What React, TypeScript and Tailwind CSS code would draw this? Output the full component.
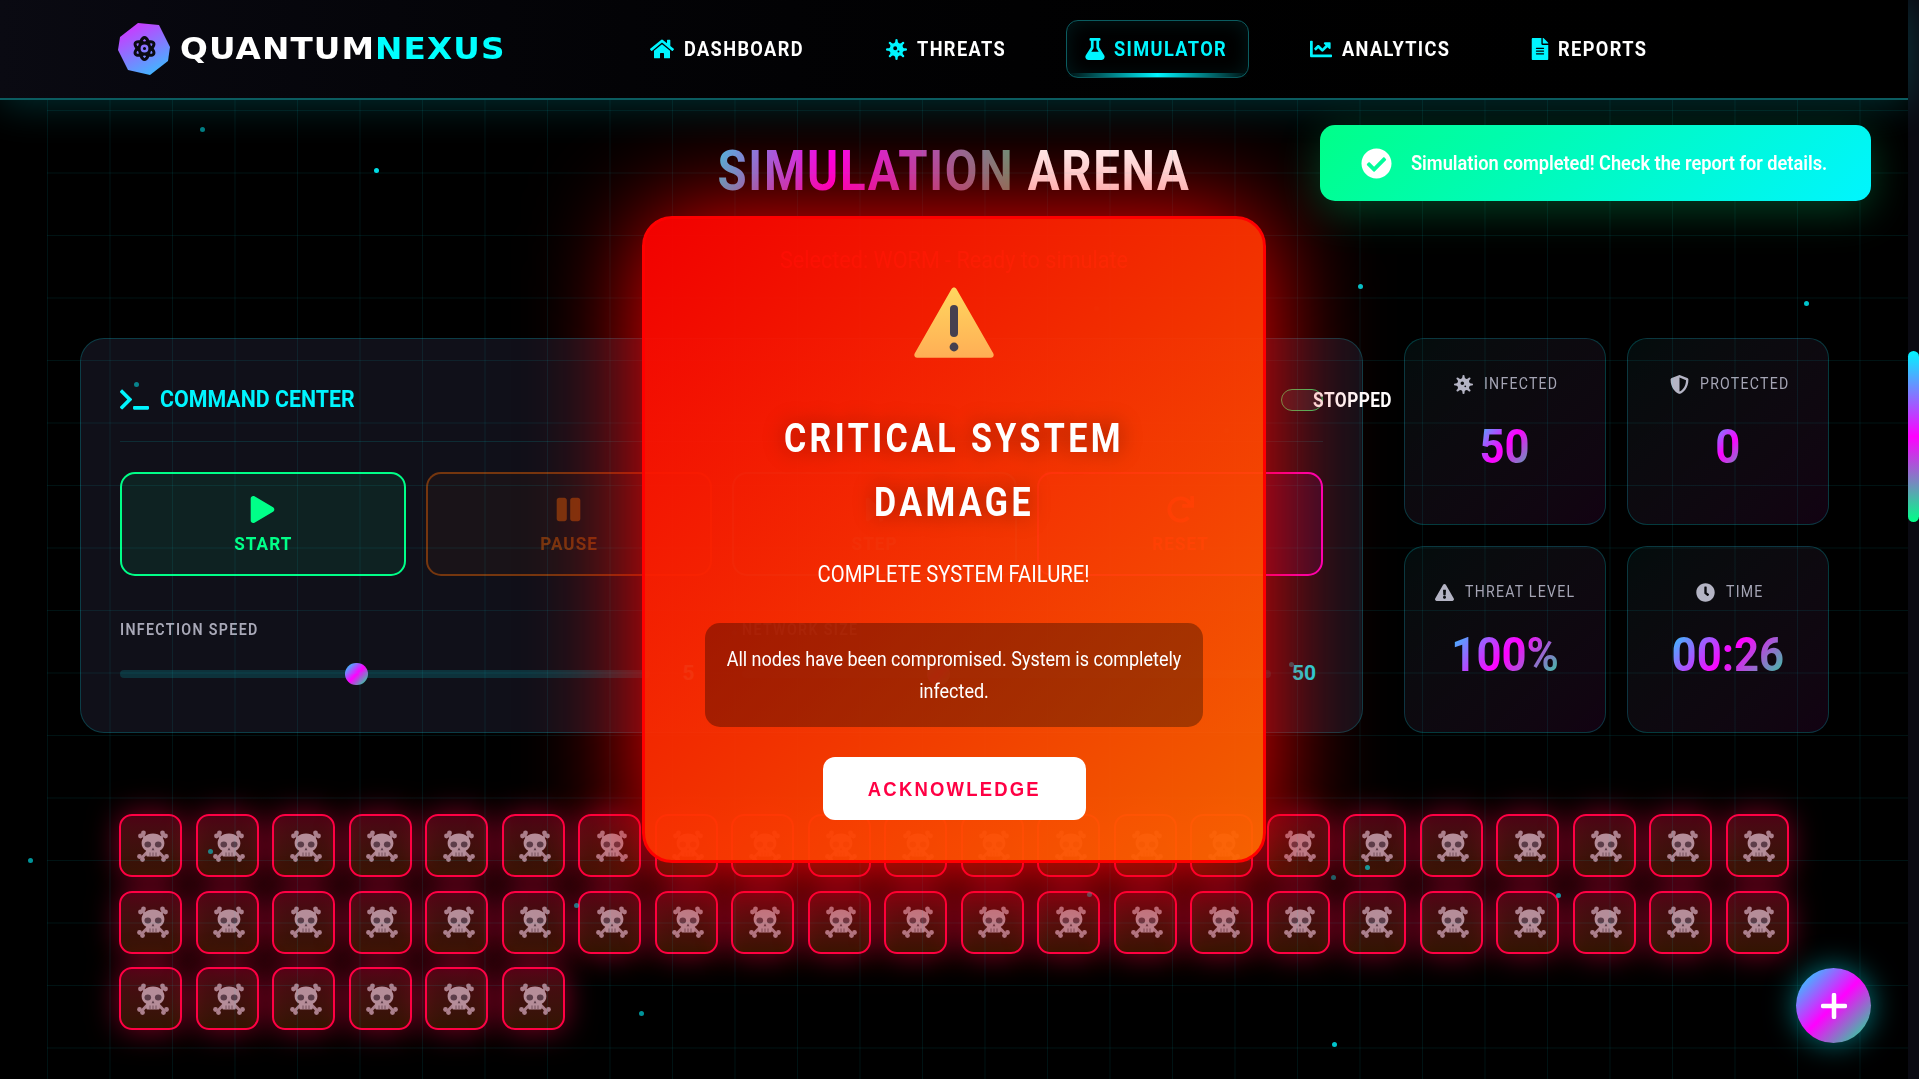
import React from "react";
import { FaAtom, FaHome, FaVirus, FaFlask, FaChartLine, FaFileAlt, FaShieldAlt, FaExclamationTriangle, FaClock, FaCheckCircle, FaPlay, FaPause, FaRedo, FaTerminal, FaStepForward } from "react-icons/fa";

const nav = [
  { label: "DASHBOARD", Icon: FaHome, active: false, item: "gap-[10px] px-[20px]", icon: "text-[24px]", w: "w-[120px]" },
  { label: "THREATS", Icon: FaVirus, active: false, item: "gap-[10px] px-[20px]", icon: "text-[21px]", w: "w-[88px]" },
  { label: "SIMULATOR", Icon: FaFlask, active: true, item: "gap-[8px] pl-[17px] pr-[23px]", icon: "text-[22px]", w: "w-[111px]" },
  { label: "ANALYTICS", Icon: FaChartLine, active: false, item: "gap-[10px] px-[20px]", icon: "text-[22px]", w: "w-[107px]" },
  { label: "REPORTS", Icon: FaFileAlt, active: false, item: "gap-[7px] pl-[18px] pr-[20px]", icon: "text-[22px]", w: "w-[88px]" },
];

const particles: [number, number, number][] = [
  [200, 127, 0.5], [374, 168, 0.9], [1358, 284, 0.8], [1804, 301, 0.8], [1094, 306, 0.1], [1224, 428, 0.1], [1289, 662, 0.4],
  [28, 858, 0.6], [208, 849, 0.5], [574, 903, 0.5], [639, 1011, 0.6], [1332, 1042, 0.8], [1365, 865, 0.6], [1331, 875, 0.4],
  [1556, 893, 0.6], [1087, 892, 0.4], [134, 382, 0.5], [732, 630, 0.15],
];

const nodes = Array.from({ length: 50 }, (_, i) => i);
const tri = "bg-[linear-gradient(135deg,#00f5ff,#ff00ff,#00ff88)]";

function Skull() {
  return (
    <svg viewBox="0 0 32 32" className="h-[32px] w-[32px] translate-x-[2px]">
      <g stroke="#ab7f8c" strokeWidth="3" strokeLinecap="round">
        <path d="M5 4.500L27 27.500M27 4.500L5 27.500" />
      </g>
      <g fill="#ab7f8c">
        <circle cx="3.500" cy="6" r="2.400" /><circle cx="6.500" cy="3" r="2.400" />
        <circle cx="28.500" cy="6" r="2.400" /><circle cx="25.500" cy="3" r="2.400" />
        <circle cx="2.500" cy="26.500" r="2.400" /><circle cx="5.500" cy="29.500" r="2.400" />
        <circle cx="29.500" cy="26.500" r="2.400" /><circle cx="26.500" cy="29.500" r="2.400" />
      </g>
      <path d="M16 3.500C9 3.500 4.600 8 4.600 13.300c0 3.500 1.900 6 4.600 7.400v4.300c0 1 .8 1.500 1.700 1.500h10.200c.9 0 1.700-.5 1.700-1.500v-4.300c2.700-1.400 4.600-3.900 4.600-7.400C27.400 8 23 3.500 16 3.500z" fill="#b58d99" />
      <ellipse cx="10.800" cy="14.500" rx="3.300" ry="3" fill="#5c3d49" />
      <ellipse cx="21.200" cy="14.500" rx="3.300" ry="3" fill="#5c3d49" />
      <path d="M16 17.600l1.400 2.600h-2.800z" fill="#5c3d49" />
      <path d="M13 22.500v3.800M16 22.500v3.800M19 22.500v3.800" stroke="#6d4a56" strokeWidth="0.9" />
    </svg>
  );
}

function Warning() {
  return (
    <svg viewBox="0 0 80 71" className="h-[71px] w-[80px]">
      <defs>
        <linearGradient id="warn" x1="0" y1="0" x2="0" y2="1">
          <stop offset="0" stopColor="#ffd75f" />
          <stop offset="1" stopColor="#ffae55" />
        </linearGradient>
      </defs>
      <path d="M37.400 2.200c1.200-2.400 4-2.400 5.200 0l36.600 64c1.200 2.200.2 4.600-2.400 4.600H3.200C.6 70.800-.4 68.400.8 66.200z" fill="url(#warn)" />
      <rect x="36" y="18" width="8" height="32" rx="4" fill="#45404f" />
      <circle cx="40" cy="60" r="4.400" fill="#45404f" />
    </svg>
  );
}

function Stat({ Icon, label, value, w }: { Icon: React.ComponentType<{ className?: string }>; label: string; value: string; w: string }) {
  return (
    <div className="flex h-[187px] flex-col items-center rounded-[20px] border border-[#00f5ff33] bg-gradient-to-br from-[#00f5ff0d] to-[#ff00ff12] pt-[30px]">
      <div className="flex h-[30px] items-center gap-[11px] text-[17px] tracking-[1.5px] text-[#a5a5b5]">
        <Icon className="text-[19px] text-[#b4b4c4]" />
        <span className={`whitespace-nowrap ${w}`}>
          <span className="inline-block origin-left scale-x-[0.83]">{label}</span>
        </span>
      </div>
      <div className={`mt-[18px] scale-x-[0.91] bg-clip-text px-[10px] text-[48px] font-bold leading-[60px] text-transparent ${tri}`}>
        {value}
      </div>
    </div>
  );
}

function Control({ Icon, label, cls }: { Icon: React.ComponentType<{ className?: string }>; label: string; cls: string }) {
  return (
    <div className={`flex h-[104px] flex-col items-center rounded-[15px] border-[2px] pt-[22px] ${cls}`}>
      <Icon className="text-[27px]" />
      <span className="mt-[9px] scale-x-[0.9] text-[19px] font-bold leading-[24px] tracking-[1.2px]">{label}</span>
    </div>
  );
}

function Slider({ label, value, pct }: { label: string; value: string; pct: string }) {
  return (
    <div>
      <div className="origin-left scale-x-[0.89] text-[16px] font-semibold leading-[20px] tracking-[1.5px] text-[#a9a9b8]">{label}</div>
      <div className="mt-[22px] flex h-[24px] items-center">
        <div className="relative h-[8px] flex-1 rounded-full bg-[#00f5ff26]">
          <div className={`absolute top-[-7px] h-[22px] w-[23px] rounded-full ${tri} ${pct}`} />
        </div>
        <div className="w-[52px] pr-[7px] text-right text-[21px] font-bold text-[#00f5ff]">{value}</div>
      </div>
    </div>
  );
}

export default function App() {
  return (
    <div className="relative flex h-screen w-screen overflow-hidden bg-black font-['Roboto',sans-serif] text-white">
      <div className="relative min-w-0 flex-1">
        <header className="relative z-10 flex h-[100px] items-center border-b-[2px] border-[#0b5c60] bg-gradient-to-r from-[#0a0a12] to-black pl-[118px] shadow-[0_4px_40px_#00f5ff33]">
          <div className="flex w-[386px] items-center gap-[10px]">
            <div className="relative h-[52px] w-[52px]">
              <svg viewBox="0 0 52 52" className="absolute inset-0 h-full w-full">
                <defs>
                  <linearGradient id="lg" x1="0.2" y1="0" x2="0.7" y2="1">
                    <stop offset="0" stopColor="#d431ff" />
                    <stop offset="1" stopColor="#3fb8ff" />
                  </linearGradient>
                </defs>
                <polygon points="20,0 41,2 52,24 50,38 32,52 10,47 0,27 2,14" fill="url(#lg)" />
              </svg>
              <FaAtom className="absolute left-[14px] top-[13px] text-[25px] text-[#0a0a12]" />
            </div>
            <div className="origin-left scale-x-[1.09] whitespace-nowrap font-['DejaVu_Sans',sans-serif] text-[30px] font-bold leading-none tracking-[1px]">
              QUANTUM<span className="text-[#00ffff]">NEXUS</span>
            </div>
          </div>
          <nav className="ml-[125px] flex gap-[40px]">
            {nav.map(({ label, Icon, active, item, icon, w }) => (
              <div key={label} className={`relative flex h-[58px] items-center rounded-[12px] text-[20px] font-bold tracking-[1.5px] ${item} ${active ? "border border-[#0b5c60] text-[#00f5ff] shadow-[inset_0_0_20px_#00f5ff1a]" : "border border-transparent"}`}>
                <Icon className={`text-[#00f5ff] ${icon}`} />
                <span className={`whitespace-nowrap ${w}`}>
                  <span className="inline-block origin-left scale-x-[0.91]">{label}</span>
                </span>
                {active && <div className="absolute bottom-0 left-0 right-0 h-[4px] rounded-full bg-gradient-to-r from-transparent via-[#00f5ff] to-transparent" />}
              </div>
            ))}
          </nav>
        </header>

        <main className="relative px-[80px]">
          <h1 className="scale-x-[0.845] pt-[37px] text-center text-[56px] font-bold leading-[68px] tracking-[2px]">
            <span className="bg-[linear-gradient(90deg,#3fc8f0_0%,#ff00ff_38%,#5fa080_100%)] bg-clip-text text-transparent">SIMULATION</span>{" "}
            <span>ARENA</span>
          </h1>
          <p className="mt-[41px] scale-x-[0.9] text-center text-[24px] leading-[28px] text-[#ff0040] opacity-80">Selected: WORM - Ready to simulate</p>

          <div className="mt-[64px] grid grid-cols-[1283px_425px] gap-x-[41px]">
            <section className="h-[395px] rounded-[24px] border border-[#00f5ff33] bg-[#14141fcc] px-[39px] pt-[36px]">
              <div className="flex h-[67px] items-start justify-between border-b border-[#00f5ff1f]">
                <div className="mt-[8px] flex items-center gap-[11px] text-[24px] font-bold leading-[32px] text-[#00f5ff]">
                  <FaTerminal className="text-[29px]" />
                  <span className="origin-left scale-x-[0.89]">COMMAND CENTER</span>
                </div>
                <div className="relative mt-[14px] h-[22px] w-[42px] rounded-full border border-[#2fdc70] bg-[#ffffff14]">
                  <span className="absolute left-[31px] top-[-2px] origin-left scale-x-[0.86] text-[20px] font-bold leading-[24px] tracking-[0.5px]">STOPPED</span>
                </div>
              </div>
              <div className="mt-[30px] grid grid-cols-4 gap-[20px]">
                <Control Icon={FaPlay} label="START" cls="border-[#00ff88] bg-[#00ff8814] text-[#00ff88]" />
                <Control Icon={FaPause} label="PAUSE" cls="border-[#ff6b0066] bg-[#ff6b000a] text-[#ff6b0066]" />
                <Control Icon={FaStepForward} label="STEP" cls="border-[#00f5ff66] text-[#00f5ff66]" />
                <Control Icon={FaRedo} label="RESET" cls="border-[#ff00cc] bg-[#ff00cc1a] text-[#ff0044]" />
              </div>
              <div className="mt-[44px] grid grid-cols-2 gap-[40px]">
                <Slider label="INFECTION SPEED" value="5" pct="left-[225px]" />
                <Slider label="NETWORK SIZE" value="50" pct="left-[185px]" />
              </div>
            </section>
            <aside className="grid h-[395px] grid-cols-[202px_202px] gap-[21px]">
              <Stat Icon={FaVirus} label="INFECTED" value="50" w="w-[73px]" />
              <Stat Icon={FaShieldAlt} label="PROTECTED" value="0" w="w-[87px]" />
              <Stat Icon={FaExclamationTriangle} label="THREAT LEVEL" value="100%" w="w-[111px]" />
              <Stat Icon={FaClock} label="TIME" value="00:26" w="w-[35px]" />
            </aside>
          </div>

          <div className="ml-[39px] mt-[81px] grid grid-cols-[repeat(22,63px)] gap-[13.5px]">
            {nodes.map((n) => (
              <div key={n} className="flex h-[63px] items-center justify-center rounded-[13px] border-[2px] border-[#ff0044] bg-gradient-to-b from-[#ff00444d] to-[#ff660033] shadow-[0_0_30px_#ff004480]">
                <Skull />
              </div>
            ))}
          </div>
        </main>

        <div className="pointer-events-none absolute bottom-0 left-[47px] right-0 top-[100px] bg-[linear-gradient(#00f5ff14_1px,transparent_1px),linear-gradient(90deg,#00f5ff14_1px,transparent_1px)] bg-[size:62.5px_62.5px] bg-[position:0px_10px]" />

        {particles.map(([x, y, o], i) => (
          <div key={i} className="absolute h-[5px] w-[5px] rounded-full bg-[#00f5ff]" style={{ left: x, top: y, opacity: o }} />
        ))}
      </div>

      <div className="w-[11px] shrink-0 bg-[#0a0a12] pt-[351px]">
        <div className="h-[171px] rounded-full bg-[linear-gradient(180deg,#00f5ff,#ff00ff,#00ff88)]" />
      </div>

      <div className="absolute left-[642px] top-[216px] flex h-[647px] w-[624px] flex-col items-center rounded-[30px] border-[3px] border-[#ff0000] bg-[linear-gradient(135deg,#ff0000f2,#ff6600f2)] pt-[68px] shadow-[0_0_110px_#ff0000]">
        <Warning />
        <h2 className="mt-[49px] w-[520px] scale-x-[0.85] text-center text-[40px] font-bold leading-[64px] tracking-[4px] [text-shadow:0_0_24px_#00000066]">CRITICAL SYSTEM DAMAGE</h2>
        <p className="mt-[24px] scale-x-[0.88] text-center text-[23px] leading-[32px]">COMPLETE SYSTEM FAILURE!</p>
        <div className="mt-[32px] flex w-[498px] justify-center rounded-[15px] bg-[#00000052] py-[20px]">
          <p className="w-[520px] shrink-0 scale-x-[0.9] text-center text-[20px] leading-[32px]">All nodes have been compromised. System is completely infected.</p>
        </div>
        <button className="mt-[30px] h-[63px] w-[263px] rounded-[12px] bg-white font-['Liberation_Sans',sans-serif] text-[21px] font-bold tracking-[2.5px] text-[#ff0044]">
          <span className="inline-block scale-x-[0.88]">ACKNOWLEDGE</span>
        </button>
      </div>

      <div className="absolute left-[1320px] top-[125px] flex h-[76px] w-[551px] items-center gap-[19px] rounded-[15px] bg-[linear-gradient(135deg,#00ff88,#00f5ff)] pl-[41px] text-[20px] font-semibold shadow-[0_10px_40px_#00ff8840]">
        <FaCheckCircle className="text-[31px]" />
        <span className="origin-left scale-x-[0.91] whitespace-nowrap">Simulation completed! Check the report for details.</span>
      </div>

      <div className={`absolute left-[1796px] top-[968px] flex h-[75px] w-[75px] items-center justify-center rounded-full ${tri} shadow-[0_0_30px_#00f5ff80]`}>
        <svg viewBox="0 0 26 26" className="h-[26px] w-[26px]"><path d="M13 2v22M2 13h22" stroke="white" strokeWidth="4.500" strokeLinecap="round" /></svg>
      </div>
    </div>
  );
}
